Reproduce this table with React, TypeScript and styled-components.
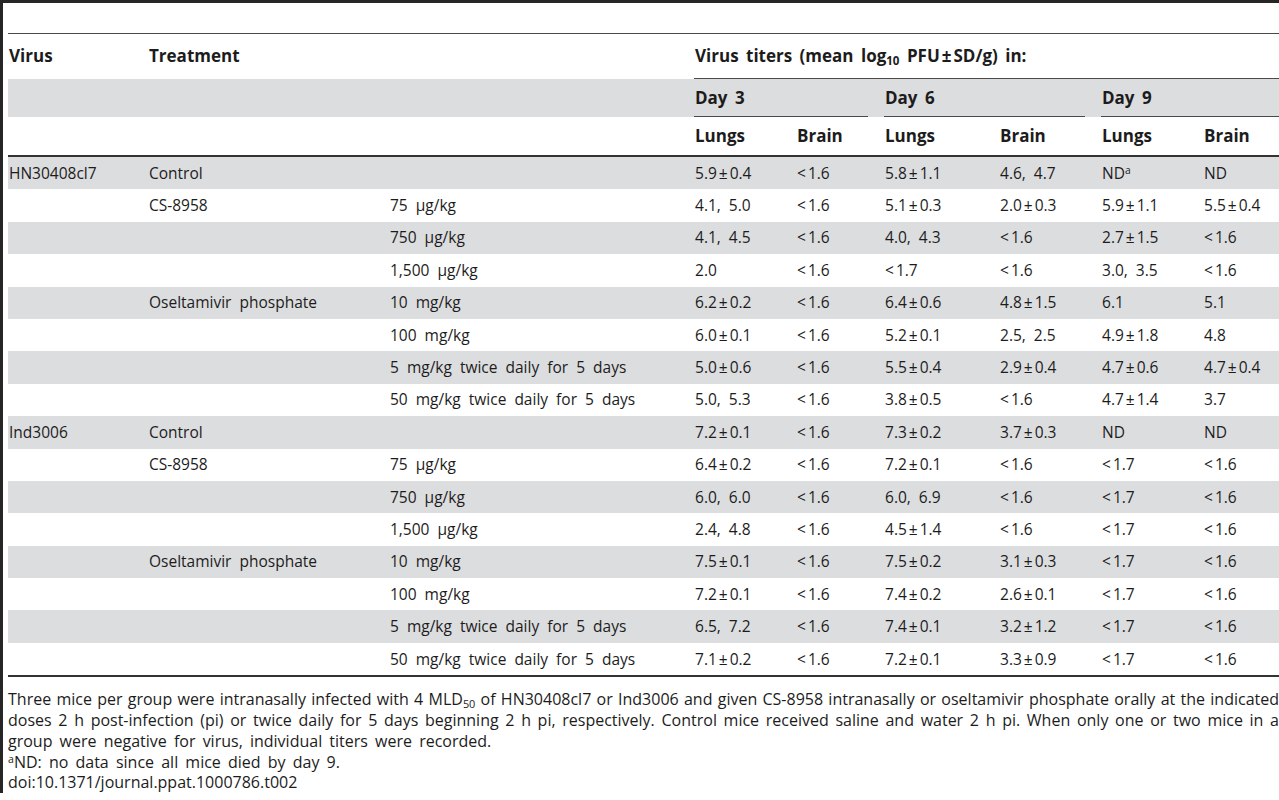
import React from "react"
import styled, { createGlobalStyle } from "styled-components"

const GlobalStyle = createGlobalStyle`
  html, body {
    margin: 0;
    padding: 0;
    background: #fff;
    overflow: hidden;
  }
  body {
    font-family: "Open Sans", "DejaVu Sans", sans-serif;
    color: #1c1c1c;
  }
`

const Frame = styled.div`
  width: 1271px;
  border-top: 3px solid #262626;
  border-left: 3px solid #262626;
  padding: 30px 0 0 5px;
`

const Table = styled.table`
  width: 100%;
  table-layout: fixed;
  border-collapse: separate;
  border-spacing: 0;
  border-top: 1px solid #4a4a4a;
  font-size: 15.5px;
  word-spacing: 4px;
`

const HeadRow = styled.tr<{ $band?: boolean }>`
  background: ${p => (p.$band ? "#dcdddf" : "transparent")};
`

// height is the content box: rows end up $h tall once the padding is added
const HeadCell = styled.th<{ $h: number; $rule?: "short" | "full"; $thick?: boolean }>`
  height: ${p => p.$h - 2}px;
  padding: 0 0 2px 1px;
  text-align: left;
  vertical-align: middle;
  font-size: 17px;
  font-weight: 700;
  word-spacing: 3px;
  white-space: nowrap;
  background-image: ${p => (p.$rule ? "linear-gradient(#4a4a4a, #4a4a4a)" : "none")};
  background-repeat: no-repeat;
  background-position: left bottom;
  background-size: ${p => (p.$rule === "short" ? "calc(100% - 16px) 1px" : "100% 1px")};
  border-bottom: ${p => (p.$thick ? "2px solid #333" : "none")};
`

const Row = styled.tr<{ $band: boolean }>`
  background: ${p => (p.$band ? "#dcdddf" : "transparent")};
`

const Cell = styled.td`
  height: 31.4px;
  padding: 0 0 1px 1px;
  vertical-align: middle;
  white-space: nowrap;

  tr:last-child > & {
    border-bottom: 2px solid #333;
  }
`

const Sym = styled.span<{ $kind: string }>`
  margin: ${p => (p.$kind === "<" ? "0 2px 0 0" : "0 2px")};
`

const Sub = styled.sub`
  font-size: 0.68em;
  vertical-align: -0.3em;
  line-height: 0;
`

const Sup = styled.sup`
  font-size: 0.66em;
  vertical-align: 0.45em;
  line-height: 0;
`

const Caption = styled.div`
  margin-top: 12px;
  font-size: 16px;
  line-height: 20.8px;
`

const CaptionLine = styled.div<{ $justify?: boolean }>`
  text-align: ${p => (p.$justify ? "justify" : "left")};
  text-align-last: ${p => (p.$justify ? "justify" : "auto")};
  word-spacing: ${p => (p.$justify ? "0" : "3px")};
  white-space: nowrap;
`

const widths = [140, 241, 305, 102, 88, 115, 102, 102, 76]

type DataRow = [string, string, string, string, string, string, string, string, string]

const rows: DataRow[] = [
  ["HN30408cl7", "Control", "", "5.9±0.4", "<1.6", "5.8±1.1", "4.6, 4.7", "ND*", "ND"],
  ["", "CS-8958", "75 μg/kg", "4.1, 5.0", "<1.6", "5.1±0.3", "2.0±0.3", "5.9±1.1", "5.5±0.4"],
  ["", "", "750 μg/kg", "4.1, 4.5", "<1.6", "4.0, 4.3", "<1.6", "2.7±1.5", "<1.6"],
  ["", "", "1,500 μg/kg", "2.0", "<1.6", "<1.7", "<1.6", "3.0, 3.5", "<1.6"],
  ["", "Oseltamivir phosphate", "10 mg/kg", "6.2±0.2", "<1.6", "6.4±0.6", "4.8±1.5", "6.1", "5.1"],
  ["", "", "100 mg/kg", "6.0±0.1", "<1.6", "5.2±0.1", "2.5, 2.5", "4.9±1.8", "4.8"],
  ["", "", "5 mg/kg twice daily for 5 days", "5.0±0.6", "<1.6", "5.5±0.4", "2.9±0.4", "4.7±0.6", "4.7±0.4"],
  ["", "", "50 mg/kg twice daily for 5 days", "5.0, 5.3", "<1.6", "3.8±0.5", "<1.6", "4.7±1.4", "3.7"],
  ["Ind3006", "Control", "", "7.2±0.1", "<1.6", "7.3±0.2", "3.7±0.3", "ND", "ND"],
  ["", "CS-8958", "75 μg/kg", "6.4±0.2", "<1.6", "7.2±0.1", "<1.6", "<1.7", "<1.6"],
  ["", "", "750 μg/kg", "6.0, 6.0", "<1.6", "6.0, 6.9", "<1.6", "<1.7", "<1.6"],
  ["", "", "1,500 μg/kg", "2.4, 4.8", "<1.6", "4.5±1.4", "<1.6", "<1.7", "<1.6"],
  ["", "Oseltamivir phosphate", "10 mg/kg", "7.5±0.1", "<1.6", "7.5±0.2", "3.1±0.3", "<1.7", "<1.6"],
  ["", "", "100 mg/kg", "7.2±0.1", "<1.6", "7.4±0.2", "2.6±0.1", "<1.7", "<1.6"],
  ["", "", "5 mg/kg twice daily for 5 days", "6.5, 7.2", "<1.6", "7.4±0.1", "3.2±1.2", "<1.7", "<1.6"],
  ["", "", "50 mg/kg twice daily for 5 days", "7.1±0.2", "<1.6", "7.2±0.1", "3.3±0.9", "<1.7", "<1.6"],
]

// "ND*" carries the footnote mark; ± and < get a little room like the math glyphs
const renderValue = (v: string) => {
  const mark = v.endsWith("*")
  const text = mark ? v.slice(0, -1) : v
  return (
    <>
      {text.split(/([±<])/).map((p, i) =>
        p === "±" || p === "<" ? (
          <Sym key={i} $kind={p}>
            {p}
          </Sym>
        ) : (
          p
        )
      )}
      {mark && <Sup>a</Sup>}
    </>
  )
}

const App = () => (
  <>
    <GlobalStyle />
    <Frame>
      <Table>
        <colgroup>
          {widths.map((w, i) => (
            <col key={i} style={{ width: w }} />
          ))}
        </colgroup>
        <thead>
          <HeadRow>
            <HeadCell $h={45}>Virus</HeadCell>
            <HeadCell $h={45} colSpan={2}>Treatment</HeadCell>
            <HeadCell $h={45} colSpan={6} $rule="full">
              Virus titers (mean log<Sub>10</Sub> PFU<Sym $kind="±">±</Sym>SD/g) in:
            </HeadCell>
          </HeadRow>
          <HeadRow $band>
            <HeadCell $h={38} colSpan={3} />
            <HeadCell $h={38} colSpan={2} $rule="short">Day 3</HeadCell>
            <HeadCell $h={38} colSpan={2} $rule="short">Day 6</HeadCell>
            <HeadCell $h={38} colSpan={2} $rule="full">Day 9</HeadCell>
          </HeadRow>
          <HeadRow>
            <HeadCell $h={38} colSpan={3} $thick />
            {["Lungs", "Brain", "Lungs", "Brain", "Lungs", "Brain"].map((t, i) => (
              <HeadCell key={i} $h={38} $thick>
                {t}
              </HeadCell>
            ))}
          </HeadRow>
        </thead>
        <tbody>
          {rows.map((r, i) => (
            <Row key={i} $band={i % 2 === 0}>
              {r.map((v, j) => (
                <Cell key={j}>{renderValue(v)}</Cell>
              ))}
            </Row>
          ))}
        </tbody>
      </Table>
      <Caption>
        <CaptionLine $justify>
          Three mice per group were intranasally infected with 4 MLD<Sub>50</Sub> of HN30408cl7 or Ind3006 and given
          CS-8958 intranasally or oseltamivir phosphate orally at the indicated
        </CaptionLine>
        <CaptionLine $justify>
          doses 2 h post-infection (pi) or twice daily for 5 days beginning 2 h pi, respectively. Control mice received
          saline and water 2 h pi. When only one or two mice in a
        </CaptionLine>
        <CaptionLine>group were negative for virus, individual titers were recorded.</CaptionLine>
        <CaptionLine>
          <Sup>a</Sup>ND: no data since all mice died by day 9.
        </CaptionLine>
        <CaptionLine>doi:10.1371/journal.ppat.1000786.t002</CaptionLine>
      </Caption>
    </Frame>
  </>
)

export default App
